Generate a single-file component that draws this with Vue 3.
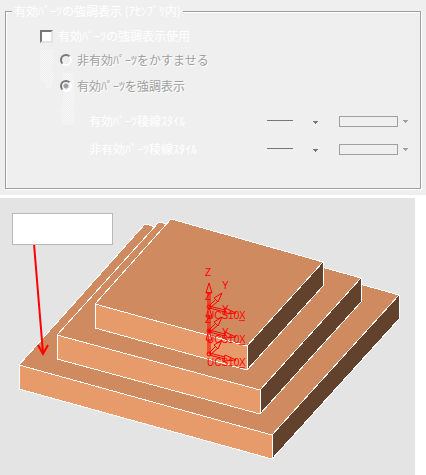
<script setup>
import { ref } from 'vue'

const useHighlight = ref(false)
const mode = ref('highlight')

const modes = [
  { value: 'fade', label: '非有効ﾊﾟｰﾂをかすませる' },
  { value: 'highlight', label: '有効ﾊﾟｰﾂを強調表示' },
]

const styleRows = [
  { id: 'active', label: '有効ﾊﾟｰﾂ稜線ｽﾀｲﾙ' },
  { id: 'inactive', label: '非有効ﾊﾟｰﾂ稜線ｽﾀｲﾙ' },
]

// Slabs from bottom to top: corner points of the upper face.
const thickness = 24
const slabs = [
  { back: [145, 224], right: [399, 295], front: [272, 435], left: [19, 365] },
  { back: [159, 222], right: [361, 278], front: [260, 390], left: [57, 335] },
  { back: [171, 219], right: [323, 262], front: [247, 346], left: [95, 304] },
]

const down = ([x, y]) => [x, y + thickness]
const points = (...list) => list.map((p) => p.join(',')).join(' ')

const origins = [354, 331, 307]
</script>

<template>
  <main class="page">
    <form class="panel">
      <fieldset class="group">
        <legend class="title">有効ﾊﾟｰﾂの強調表示 (ｱｾﾝﾌﾞﾘ内)</legend>
        <i class="shade shade-check"></i>
        <i class="shade shade-radio"></i>

        <label class="check-row">
          <input v-model="useHighlight" class="check" type="checkbox" />
          <span>有効ﾊﾟｰﾂの強調表示使用</span>
        </label>

        <label v-for="m in modes" :key="m.value" class="radio-row">
          <input v-model="mode" class="radio" type="radio" name="mode" :value="m.value" disabled />
          <span>{{ m.label }}</span>
        </label>

        <div class="styles">
          <div v-for="row in styleRows" :key="row.id" class="style-row">
            <label :id="`${row.id}-label`" class="style-label" :for="`${row.id}-line`">{{ row.label }}</label>
            <span class="picker line-picker">
              <svg class="art" viewBox="0 0 52 12" shape-rendering="crispEdges" aria-hidden="true">
                <path d="M0 5h26v1H0z" />
                <path d="M46 6h5v1h-1v1h-1v1h-1v-1h-1v-1h-1z" />
              </svg>
              <select :id="`${row.id}-line`" class="drop"><option></option></select>
            </span>
            <span class="picker color-picker">
              <span class="swatch"></span>
              <svg class="arrow" viewBox="0 0 5 3" shape-rendering="crispEdges" aria-hidden="true">
                <path d="M0 0h5v1H4v1H3v1H2V2H1V1H0z" />
              </svg>
              <select class="drop" :aria-labelledby="`${row.id}-label`" disabled><option></option></select>
            </span>
          </div>
        </div>
      </fieldset>
    </form>

    <section class="view">
      <svg class="scene" viewBox="0 198 415 277">
        <g class="model" shape-rendering="crispEdges">
          <g v-for="(s, i) in slabs" :key="i">
            <polygon class="top" :points="points(s.back, s.right, s.front, s.left)" />
            <polygon class="front" :points="points(s.left, s.front, down(s.front), down(s.left))" />
            <polygon class="side" :points="points(s.front, s.right, down(s.right), down(s.front))" />
          </g>
        </g>

        <g v-for="y in origins" :key="y" class="axes" :transform="`translate(209 ${y})`">
          <path d="M-1 0V-14M1 0V-14M-3 -14H3L0 -24Z" />
          <path d="M0 -1L7 -8M1 1L9 -6M5 -9L13 -14L9 -5Z" />
          <path d="M0 -1L16 3M0 1L16 5M16 1L27 6L15 7Z" />
          <circle r="2" />
          <text x="-4" y="-31">Z</text>
          <text x="13" y="-18">Y</text>
          <text x="-2" y="12">UCS10_</text>
          <text x="30" y="12">X</text>
        </g>

        <path class="leader" d="M34 244L43 353" />
        <path class="leader" d="M38 345L43 354L48 345" />
        <rect class="callout" x="12.5" y="213.5" width="100" height="31" />
      </svg>
    </section>
  </main>
</template>

<style>
body {
  background: #fff;
}
</style>

<style scoped>
.page {
  font: 12px/14px "Noto Sans CJK JP", sans-serif;
  color: #fff;
}
.panel {
  padding: 4px 5px 6px;
  background: #efefef;
}
.group {
  position: relative;
  min-width: 0;
  margin: 0;
  padding: 7px 11px 25px 34px;
  border: 1px solid #9f9f9f;
  box-shadow: inset 1px 1px #fff, 1px 1px #fff;
}
.title {
  height: 14px;
  margin-left: -28px;
  padding: 0 2px;
  background: #efefef;
  white-space: nowrap;
}
.check-row,
.radio-row {
  position: relative;
  display: flex;
  align-items: center;
  white-space: nowrap;
}
.check-row {
  gap: 5px;
  height: 22px;
}
.radio-row {
  gap: 5px;
  height: 26px;
  padding-left: 20px;
  color: #9f9f9f;
  text-shadow: 1px 1px #fff;
}
.check,
.radio {
  appearance: none;
  flex: none;
  box-sizing: border-box;
  margin: 0;
}
.check {
  width: 13px;
  height: 13px;
  background: #fff;
  border: 2px solid;
  border-color: #777 #e3e3e3 #e3e3e3 #777;
}
.check:checked {
  background: #777;
}
.radio {
  width: 12px;
  height: 12px;
  border: 2px solid;
  border-color: #777 #fff #fff #777;
  border-radius: 50%;
}
.radio:checked {
  background: radial-gradient(circle, #9f9f9f 2px, transparent 3px);
}
.shade {
  position: absolute;
  opacity: 0.5;
  background: repeating-conic-gradient(#fff 0 25%, transparent 0 50%) 0 0 / 2px 2px;
}
.shade-check {
  left: 34px;
  top: 32px;
  width: 14px;
  height: 39px;
  clip-path: polygon(0 0, 100% 0, 90% 45%, 100% 70%, 80% 100%, 45% 100%, 45% 85%, 0 78%);
}
.shade-radio {
  left: 54px;
  top: 55px;
  width: 15px;
  height: 52px;
  clip-path: polygon(20% 0, 90% 0, 100% 45%, 85% 70%, 100% 90%, 80% 100%, 20% 100%, 0 80%, 20% 55%);
}
.styles {
  margin-top: 8px;
}
.style-row {
  display: flex;
  align-items: center;
  height: 28px;
  padding-left: 49px;
}
.style-label {
  flex: 1;
  white-space: nowrap;
}
.picker {
  position: relative;
  display: flex;
  align-items: center;
  flex: none;
  height: 12px;
}
.line-picker {
  width: 52px;
  margin-right: 20px;
}
.color-picker {
  width: 70px;
  gap: 5px;
}
.art {
  width: 52px;
  height: 12px;
  fill: #777;
}
.swatch {
  box-sizing: border-box;
  width: 59px;
  height: 11px;
  border: 1px solid #9f9f9f;
}
.arrow {
  width: 5px;
  height: 3px;
  fill: #9f9f9f;
}
.drop {
  position: absolute;
  inset: 0;
  width: 100%;
  height: 100%;
  padding: 0;
  appearance: none;
  background: transparent;
  border: 0;
}
.view {
  margin: 3px 11px 0 0;
}
.scene {
  display: block;
  width: 100%;
  background: #e4e4e4;
}
.model {
  stroke: #fff;
  stroke-width: 1;
  stroke-linejoin: round;
}
.top {
  fill: #cf8b5f;
}
.front {
  fill: #e79b6b;
}
.side {
  fill: #63422d;
}
.axes {
  fill: none;
  stroke: #f00;
  stroke-width: 1;
}
.axes text {
  fill: #f00;
  stroke: none;
  font: 10px "Liberation Sans", sans-serif;
}
.leader {
  fill: none;
  stroke: #f00;
  stroke-width: 2;
}
.callout {
  fill: #fff;
  stroke: #b8b8b8;
}
</style>
